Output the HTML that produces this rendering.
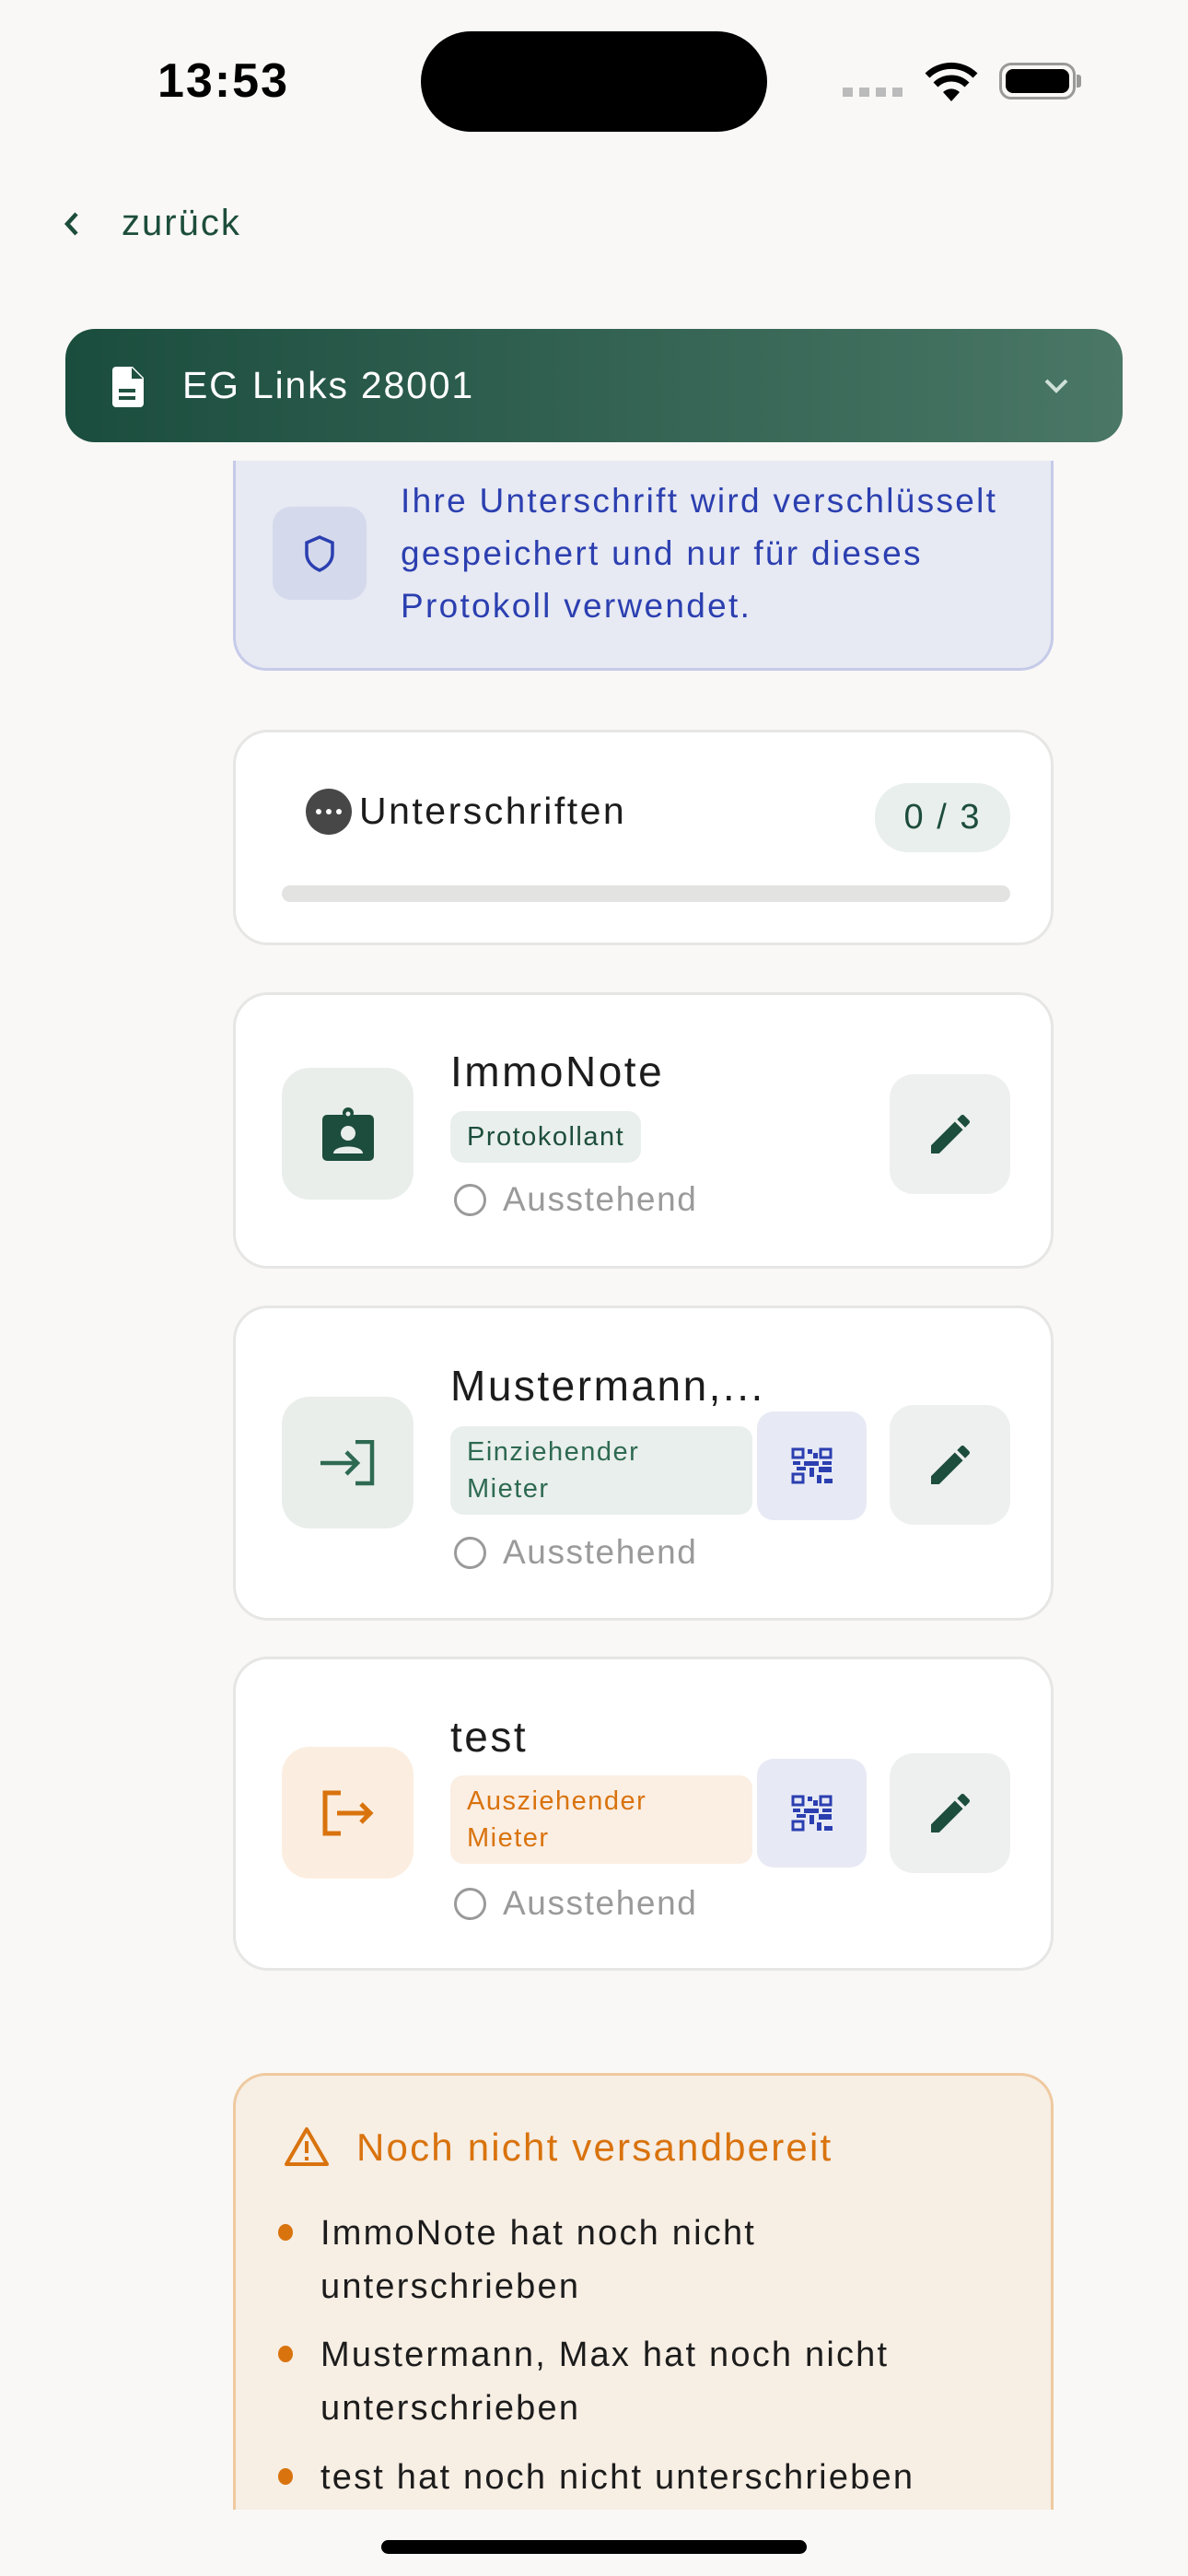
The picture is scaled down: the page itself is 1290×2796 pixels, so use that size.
<!DOCTYPE html>
<html><head><meta charset="utf-8"><style>
*{margin:0;padding:0;box-sizing:border-box}
body{width:1290px;height:2796px;background:#f9f8f6;font-family:"Liberation Sans",sans-serif;position:relative;overflow:hidden}
.a{position:absolute}
.card{position:absolute;left:253px;width:891px;background:#fff;border:3px solid #e6e6e4;border-radius:38px}
.ib{position:absolute;left:50px;width:143px;height:143px;border-radius:30px;display:flex;align-items:center;justify-content:center}
.name{position:absolute;left:233px;font-size:46px;font-weight:500;color:#1c1c1c;letter-spacing:2.5px}
.badge{position:absolute;left:233px;border-radius:14px;font-size:29px;font-weight:500;letter-spacing:1.5px;padding:8px 18px;line-height:40px}
.st{position:absolute;left:233px;font-size:37px;color:#9a9a9a;letter-spacing:1.6px;display:flex;align-items:center}
.st i{display:inline-block;width:35px;height:35px;border:3.5px solid #9a9a9a;border-radius:50%;margin:0 18px 0 4px}
.edit{position:absolute;left:710px;width:131px;height:130px;background:#edf0ee;border-radius:26px;display:flex;align-items:center;justify-content:center}
.qr{position:absolute;left:566px;width:119px;height:118px;background:#e7eaf5;border-radius:18px;display:flex;align-items:center;justify-content:center}
.li{position:absolute;left:348px;font-size:38px;color:#1c1c1c;line-height:58px;letter-spacing:2.2px}
.dot{position:absolute;left:302px;width:16px;height:18px;border-radius:50%;background:#d9730d}
</style></head><body>
<div class="a" style="left:171px;top:58px;font-size:52px;font-weight:700;color:#000;letter-spacing:2px">13:53</div>
<div class="a" style="left:457px;top:34px;width:376px;height:109px;background:#000;border-radius:55px"></div>
<div class="a" style="left:915px;top:95px;width:66px;height:10px;background:repeating-linear-gradient(90deg,#bbb 0 11px,transparent 11px 18px)"></div>
<svg class="a" style="left:1002px;top:66px" width="62" height="44" viewBox="0 0 62 44"><path d="M31 44 L22 34 A13 13 0 0 1 40 34Z" fill="#000"/><path d="M14 26 A24 24 0 0 1 48 26" stroke="#000" stroke-width="7" fill="none"/><path d="M5 16 A37 37 0 0 1 57 16" stroke="#000" stroke-width="7" fill="none"/></svg>
<div class="a" style="left:1085px;top:68px;width:83px;height:40px;border:3px solid #999;border-radius:13px;padding:4px"><div style="width:100%;height:100%;background:#000;border-radius:8px"></div></div>
<div class="a" style="left:1169px;top:81px;width:5px;height:14px;background:#999;border-radius:0 3px 3px 0"></div>
<svg class="a" style="left:68px;top:229px" width="20" height="28" viewBox="0 0 20 28"><path d="M15 3 L5 14 L15 25" stroke="#1d4d3c" stroke-width="4.5" fill="none"/></svg>
<div class="a" style="left:132px;top:220px;font-size:40px;font-weight:500;color:#1d4d3c;letter-spacing:2px">zurück</div>
<div class="a" style="left:253px;top:500px;width:891px;height:228px;background:#e7e9f3;border:3px solid #c5cbe8;border-top:none;border-radius:0 0 36px 36px"></div>
<div class="a" style="left:296px;top:550px;width:102px;height:101px;background:#d4d9ec;border-radius:20px;display:flex;align-items:center;justify-content:center"><svg width="34" height="40" viewBox="0 0 34 40"><path d="M17 2 L31 8 V20 C31 29 24 35 17 38 C10 35 3 29 3 20 V8Z" stroke="#2b3fb0" stroke-width="3.5" fill="none"/></svg></div>
<div class="a" style="left:435px;top:515px;font-size:37px;line-height:57px;color:#2b3fb0;letter-spacing:2.3px">Ihre Unterschrift wird verschlüsselt<br>gespeichert und nur für dieses<br>Protokoll verwendet.</div>
<div class="a" style="left:71px;top:357px;width:1148px;height:123px;border-radius:32px;background:linear-gradient(90deg,#1b4d3e,#4a7766)"></div>
<svg class="a" style="left:122px;top:398px" width="36" height="44" viewBox="0 0 36 44"><path d="M4 0 H22 L34 12 V40 A4 4 0 0 1 30 44 H4 A4 4 0 0 1 0 40 V4 A4 4 0 0 1 4 0Z" fill="#fff"/><path d="M21 1 V13 H33" fill="#1f5040"/><rect x="7" y="24" width="18" height="4" fill="#1f5040"/><rect x="7" y="32" width="18" height="4" fill="#1f5040"/></svg>
<div class="a" style="left:198px;top:395px;font-size:41px;font-weight:500;color:#fff;letter-spacing:1.8px">EG Links 28001</div>
<svg class="a" style="left:1133px;top:410px" width="28" height="18" viewBox="0 0 28 18"><path d="M3 3 L14 14 L25 3" stroke="#cfe0d8" stroke-width="4" fill="none"/></svg>

<div class="card" style="top:792px;height:234px">
 <div class="a" style="left:76px;top:61px;width:50px;height:50px;border-radius:50%;background:#474747"><div style="position:absolute;left:11px;top:22px;width:6px;height:6px;border-radius:50%;background:#fff;box-shadow:11px 0 #fff,22px 0 #fff"></div></div>
 <div class="a" style="left:134px;top:62px;font-size:41px;font-weight:500;color:#1c1c1c;letter-spacing:2.5px">Unterschriften</div>
 <div class="a" style="left:694px;top:55px;width:147px;height:75px;border-radius:36px;background:#e9efec;color:#1d4d3c;font-size:38px;text-align:center;line-height:75px;letter-spacing:2px">0 / 3</div>
 <div class="a" style="left:50px;top:166px;width:791px;height:18px;border-radius:9px;background:#e3e3e1"></div>
</div>

<div class="card" style="top:1077px;height:300px">
 <div class="ib" style="top:79px;background:#e9eeeb"><svg width="56" height="58" viewBox="0 0 56 58"><rect x="0" y="8" width="56" height="50" rx="5" fill="#1d4d3c"/><circle cx="28" cy="6" r="6" fill="#1d4d3c"/><circle cx="28" cy="7" r="2.5" fill="#e9eeeb"/><circle cx="28" cy="28" r="8" fill="#e9eeeb"/><path d="M12 50 C12 40 44 40 44 50Z" fill="#e9eeeb"/></svg></div>
 <div class="name" style="top:56px">ImmoNote</div>
 <div class="badge" style="top:126px;background:#e9efec;color:#1d4d3c">Protokollant</div>
 <div class="st" style="top:201px"><i></i>Ausstehend</div>
 <div class="edit" style="top:86px"><svg width="56" height="56" viewBox="0 0 24 24"><path d="M3 17.25V21h3.75L17.81 9.94l-3.75-3.75zM20.71 7.04a1 1 0 000-1.41l-2.34-2.34a1 1 0 00-1.41 0l-1.83 1.83 3.75 3.75z" fill="#1d4d3c"/></svg></div>
</div>

<div class="card" style="top:1417px;height:342px">
 <div class="ib" style="top:96px;background:#e9eeeb"><svg width="60" height="50" viewBox="0 0 60 50"><path d="M0 25 H40 M28 13 L40 25 L28 37" stroke="#2e6a52" stroke-width="4.5" fill="none"/><path d="M38 2 H56 V47 H38" stroke="#2e6a52" stroke-width="4.5" fill="none"/></svg></div>
 <div class="name" style="top:57px">Mustermann,...</div>
 <div class="badge" style="top:128px;width:328px;background:#e9efec;color:#2e6a52">Einziehender<br>Mieter</div>
 <div class="qr" style="top:112px"><svg width="46" height="40" viewBox="0 0 46 40"><g fill="none" stroke="#2b3fb0" stroke-width="3"><rect x="2" y="2" width="11" height="9"/><rect x="32" y="2" width="11" height="9"/><rect x="2" y="29" width="11" height="9"/></g><g fill="#2b3fb0"><rect x="18" y="2" width="5" height="5"/><rect x="24" y="6" width="5" height="6"/><rect x="2" y="15" width="8" height="4"/><rect x="14" y="15" width="16" height="5"/><rect x="34" y="15" width="10" height="4"/><rect x="6" y="21" width="10" height="4"/><rect x="20" y="22" width="5" height="10"/><rect x="30" y="21" width="14" height="6"/><rect x="28" y="30" width="5" height="9"/><rect x="36" y="34" width="9" height="5"/></g></svg></div>
 <div class="edit" style="top:105px"><svg width="56" height="56" viewBox="0 0 24 24"><path d="M3 17.25V21h3.75L17.81 9.94l-3.75-3.75zM20.71 7.04a1 1 0 000-1.41l-2.34-2.34a1 1 0 00-1.41 0l-1.83 1.83 3.75 3.75z" fill="#1d4d3c"/></svg></div>
 <div class="st" style="top:244px"><i></i>Ausstehend</div>
</div>

<div class="card" style="top:1798px;height:341px">
 <div class="ib" style="top:95px;background:#fbeee1"><svg width="56" height="50" viewBox="0 0 56 50"><path d="M20 3 H3 V47 H20" stroke="#d9730d" stroke-width="5" fill="none"/><path d="M16 25 H52 M42 15 L52 25 L42 35" stroke="#d9730d" stroke-width="5" fill="none"/></svg></div>
 <div class="name" style="top:57px">test</div>
 <div class="badge" style="top:126px;width:328px;background:#fbeee3;color:#d9730d">Ausziehender<br>Mieter</div>
 <div class="qr" style="top:108px"><svg width="46" height="40" viewBox="0 0 46 40"><g fill="none" stroke="#2b3fb0" stroke-width="3"><rect x="2" y="2" width="11" height="9"/><rect x="32" y="2" width="11" height="9"/><rect x="2" y="29" width="11" height="9"/></g><g fill="#2b3fb0"><rect x="18" y="2" width="5" height="5"/><rect x="24" y="6" width="5" height="6"/><rect x="2" y="15" width="8" height="4"/><rect x="14" y="15" width="16" height="5"/><rect x="34" y="15" width="10" height="4"/><rect x="6" y="21" width="10" height="4"/><rect x="20" y="22" width="5" height="10"/><rect x="30" y="21" width="14" height="6"/><rect x="28" y="30" width="5" height="9"/><rect x="36" y="34" width="9" height="5"/></g></svg></div>
 <div class="edit" style="top:102px"><svg width="56" height="56" viewBox="0 0 24 24"><path d="M3 17.25V21h3.75L17.81 9.94l-3.75-3.75zM20.71 7.04a1 1 0 000-1.41l-2.34-2.34a1 1 0 00-1.41 0l-1.83 1.83 3.75 3.75z" fill="#1d4d3c"/></svg></div>
 <div class="st" style="top:244px"><i></i>Ausstehend</div>
</div>

<div class="a" style="left:253px;top:2250px;width:891px;height:474px;background:#f7eee4;border:3px solid #efc9a0;border-bottom:none;border-radius:36px 36px 0 0"></div>
<svg class="a" style="left:308px;top:2308px" width="50" height="44" viewBox="0 0 50 44"><path d="M25 3 L47 41 H3Z" stroke="#d9730d" stroke-width="4" stroke-linejoin="round" fill="none"/><rect x="23" y="16" width="4" height="13" fill="#d9730d"/><rect x="23" y="33" width="4" height="4" fill="#d9730d"/></svg>
<div class="a" style="left:387px;top:2307px;font-size:42px;font-weight:500;color:#d9730d;letter-spacing:2.2px">Noch nicht versandbereit</div>
<div class="dot" style="top:2414px"></div>
<div class="li" style="top:2395px">ImmoNote hat noch nicht<br>unterschrieben</div>
<div class="dot" style="top:2546px"></div>
<div class="li" style="top:2527px">Mustermann, Max hat noch nicht<br>unterschrieben</div>
<div class="dot" style="top:2679px"></div>
<div class="li" style="top:2660px">test hat noch nicht unterschrieben</div>
<div class="a" style="left:414px;top:2757px;width:462px;height:15px;background:#000;border-radius:8px"></div>
</body></html>
